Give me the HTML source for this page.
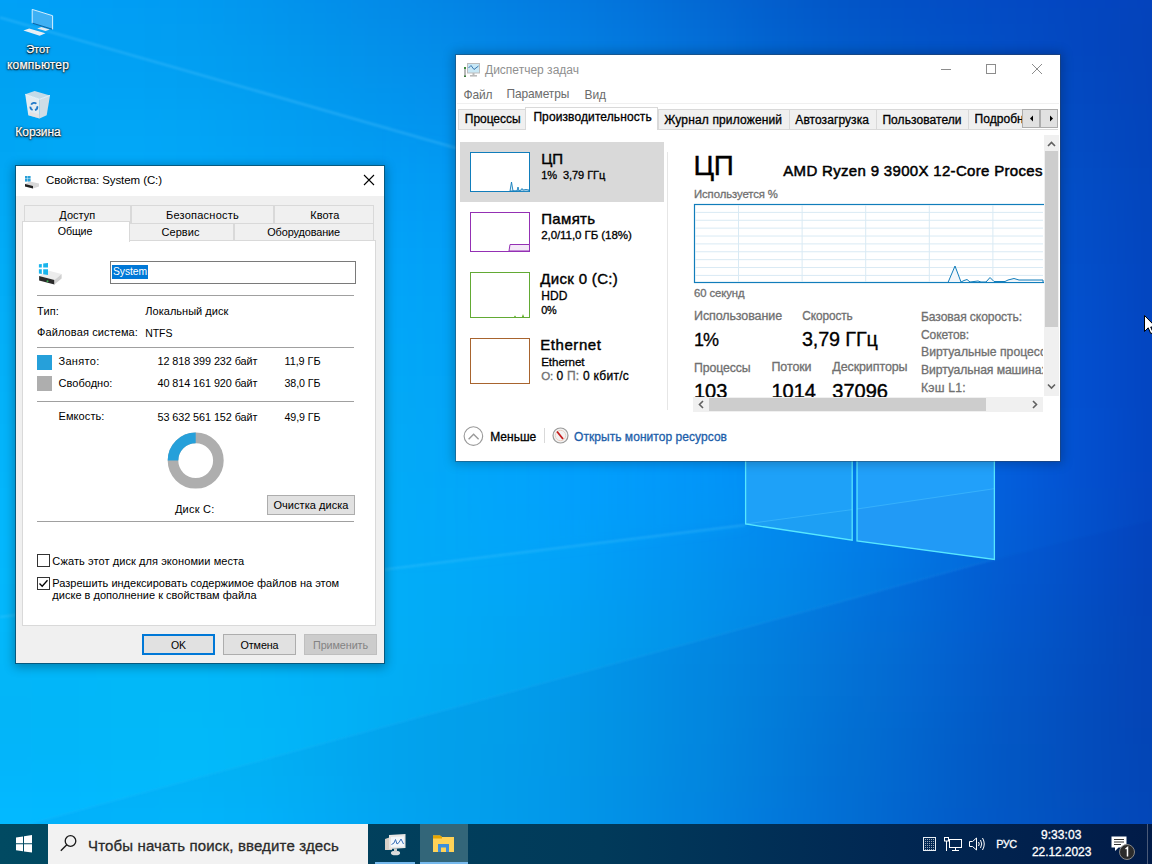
<!DOCTYPE html>
<html><head><meta charset="utf-8"><style>
html,body{margin:0;padding:0;width:1152px;height:864px;overflow:hidden;background:#0290e0}
body{position:relative;font-family:"Liberation Sans",sans-serif}
.a{position:absolute}
.t{position:absolute;white-space:pre;line-height:1}
.s{-webkit-text-stroke:0.3px currentColor}
</style></head><body>
<div id="bg" style="position:absolute;left:0;top:0;width:1152px;height:864px;overflow:hidden"><div style="position:absolute;left:-64px;top:-64px;width:1300px;height:1000px;filter:blur(8px)"><div style="position:absolute;left:0;top:0px;width:1300px;height:72px;background:linear-gradient(to right,#00a1f7 64px,#009ff6 128px,#009df4 192px,#019bf1 256px,#0296ee 320px,#0290eb 384px,#038be8 448px,#0385e5 512px,#037fe2 576px,#0379df 640px,#0371da 704px,#0368d3 768px,#035fcd 832px,#0257c8 896px,#0251c6 960px,#034dc5 1024px,#0349c3 1088px,#0345c0 1152px,#0443bc 1216px)"></div><div style="position:absolute;left:0;top:72px;width:1300px;height:16px;background:linear-gradient(to right,#00a1f5 64px,#00a0f5 128px,#019ef4 192px,#019cf1 256px,#0297ee 320px,#0292eb 384px,#038ce8 448px,#0387e6 512px,#0381e3 576px,#037be0 640px,#0373db 704px,#036ad4 768px,#0260ce 832px,#0258c9 896px,#0252c7 960px,#024ec5 1024px,#034ac3 1088px,#0346bf 1152px,#0443bb 1216px)"></div><div style="position:absolute;left:0;top:88px;width:1300px;height:16px;background:linear-gradient(to right,#00a1f4 64px,#00a0f4 128px,#019ff3 192px,#029df1 256px,#0298ee 320px,#0293eb 384px,#038ee9 448px,#0389e7 512px,#0383e4 576px,#037de1 640px,#0375dc 704px,#036cd6 768px,#0262cf 832px,#025aca 896px,#0254c7 960px,#024fc6 1024px,#034bc3 1088px,#0346bf 1152px,#0443ba 1216px)"></div><div style="position:absolute;left:0;top:104px;width:1300px;height:16px;background:linear-gradient(to right,#00a1f3 64px,#00a1f4 128px,#01a0f3 192px,#029ef1 256px,#029aef 320px,#0295ec 384px,#0390ea 448px,#038be8 512px,#0385e6 576px,#037fe2 640px,#0377dd 704px,#036ed7 768px,#0264d0 832px,#025ccb 896px,#0256c8 960px,#0251c7 1024px,#034cc4 1088px,#0346bf 1152px,#0443ba 1216px)"></div><div style="position:absolute;left:0;top:120px;width:1300px;height:16px;background:linear-gradient(to right,#00a2f3 64px,#00a2f4 128px,#01a1f4 192px,#029ff2 256px,#029bef 320px,#0296ed 384px,#0391eb 448px,#038de9 512px,#0387e7 576px,#0381e4 640px,#0379df 704px,#0370d8 768px,#0266d2 832px,#025ecd 896px,#0257ca 960px,#0252c8 1024px,#034dc4 1088px,#0347bf 1152px,#0443ba 1216px)"></div><div style="position:absolute;left:0;top:136px;width:1300px;height:16px;background:linear-gradient(to right,#00a2f2 64px,#00a3f4 128px,#01a2f4 192px,#02a0f2 256px,#029cf0 320px,#0298ee 384px,#0393ec 448px,#038feb 512px,#0389e8 576px,#0383e5 640px,#037ce1 704px,#0372da 768px,#0268d3 832px,#0260ce 896px,#0259cb 960px,#0253c9 1024px,#024ec5 1088px,#0348c0 1152px,#0443ba 1216px)"></div><div style="position:absolute;left:0;top:152px;width:1300px;height:16px;background:linear-gradient(to right,#00a3f2 64px,#00a4f4 128px,#01a3f5 192px,#02a1f3 256px,#029ef1 320px,#0299ef 384px,#0295ee 448px,#0390ec 512px,#038bea 576px,#0385e7 640px,#037ee2 704px,#0274dc 768px,#026ad5 832px,#0262d0 896px,#025bcc 960px,#0255ca 1024px,#024fc6 1088px,#0348c0 1152px,#0443ba 1216px)"></div><div style="position:absolute;left:0;top:168px;width:1300px;height:16px;background:linear-gradient(to right,#00a4f3 64px,#01a5f5 128px,#01a5f5 192px,#02a3f4 256px,#029ff2 320px,#029bf0 384px,#0296ef 448px,#0392ed 512px,#038deb 576px,#0387e8 640px,#0380e4 704px,#0276de 768px,#026cd7 832px,#0263d2 896px,#025cce 960px,#0256cb 1024px,#0250c7 1088px,#0349c1 1152px,#0344ba 1216px)"></div><div style="position:absolute;left:0;top:184px;width:1300px;height:16px;background:linear-gradient(to right,#00a5f3 64px,#01a6f5 128px,#02a6f6 192px,#02a4f5 256px,#02a0f3 320px,#029cf1 384px,#0298f0 448px,#0294ef 512px,#038fed 576px,#0389ea 640px,#0382e6 704px,#0278e0 768px,#026ed9 832px,#0265d4 896px,#025ed0 960px,#0258cd 1024px,#0251c8 1088px,#034ac2 1152px,#0344bb 1216px)"></div><div style="position:absolute;left:0;top:200px;width:1300px;height:16px;background:linear-gradient(to right,#00a5f3 64px,#01a7f6 128px,#02a7f7 192px,#02a5f6 256px,#02a1f4 320px,#029df2 384px,#029af1 448px,#0295f0 512px,#0391ee 576px,#038bec 640px,#0383e8 704px,#027ae2 768px,#0270db 832px,#0267d6 896px,#0260d2 960px,#0259ce 1024px,#0252c9 1088px,#034ac2 1152px,#0344bb 1216px)"></div><div style="position:absolute;left:0;top:216px;width:1300px;height:16px;background:linear-gradient(to right,#01a6f4 64px,#01a8f7 128px,#02a8f8 192px,#02a6f7 256px,#02a3f5 320px,#029ff4 384px,#029bf3 448px,#0297f2 512px,#0292f0 576px,#028ced 640px,#0285e9 704px,#027ce4 768px,#0272dd 832px,#0269d8 896px,#0261d4 960px,#025ad0 1024px,#0252ca 1088px,#034bc3 1152px,#0344bb 1216px)"></div><div style="position:absolute;left:0;top:232px;width:1300px;height:16px;background:linear-gradient(to right,#01a7f4 64px,#02a9f8 128px,#02a9f9 192px,#02a7f8 256px,#02a4f6 320px,#02a0f5 384px,#029df4 448px,#0299f3 512px,#0294f1 576px,#028eef 640px,#0287eb 704px,#027ee6 768px,#0274df 832px,#026bda 896px,#0263d6 960px,#025bd1 1024px,#0253cb 1088px,#034cc4 1152px,#0345bc 1216px)"></div><div style="position:absolute;left:0;top:248px;width:1300px;height:16px;background:linear-gradient(to right,#01a8f5 64px,#02aaf8 128px,#02aafa 192px,#02a8f9 256px,#02a5f7 320px,#02a1f6 384px,#029ef5 448px,#029af4 512px,#0295f2 576px,#028ff0 640px,#0288ed 704px,#027fe8 768px,#0276e2 832px,#026cdc 896px,#0264d8 960px,#025cd3 1024px,#0254cc 1088px,#034cc5 1152px,#0345bd 1216px)"></div><div style="position:absolute;left:0;top:264px;width:1300px;height:16px;background:linear-gradient(to right,#02a9f5 64px,#02abf9 128px,#02abfa 192px,#02a9fa 256px,#02a6f8 320px,#02a3f7 384px,#029ff6 448px,#029bf5 512px,#0297f3 576px,#0291f1 640px,#0289ee 704px,#0281ea 768px,#0277e4 832px,#026edf 896px,#0266da 960px,#025ed5 1024px,#0255ce 1088px,#034dc6 1152px,#0345bd 1216px)"></div><div style="position:absolute;left:0;top:280px;width:1300px;height:16px;background:linear-gradient(to right,#02aaf6 64px,#02acfa 128px,#02acfb 192px,#02aafa 256px,#02a7f9 320px,#02a4f8 384px,#02a1f7 448px,#029df6 512px,#0298f4 576px,#0292f2 640px,#028bf0 704px,#0282ec 768px,#0278e7 832px,#026fe2 896px,#0267dd 960px,#025ed6 1024px,#0256cf 1088px,#034dc7 1152px,#0345bd 1216px)"></div><div style="position:absolute;left:0;top:296px;width:1300px;height:16px;background:linear-gradient(to right,#02abf6 64px,#02adfa 128px,#02adfc 192px,#02abfb 256px,#02a8f9 320px,#02a5f8 384px,#02a2f7 448px,#029ef6 512px,#0299f5 576px,#0293f3 640px,#028bf2 704px,#0283ef 768px,#027aea 832px,#0271e5 896px,#0268df 960px,#025fd8 1024px,#0256d0 1088px,#034dc7 1152px,#0345be 1216px)"></div><div style="position:absolute;left:0;top:312px;width:1300px;height:16px;background:linear-gradient(to right,#02acf7 64px,#02aefb 128px,#02aefd 192px,#02acfc 256px,#02a9fa 320px,#02a6f9 384px,#02a3f8 448px,#029ff7 512px,#029af5 576px,#0294f4 640px,#028cf3 704px,#0284f1 768px,#027bed 832px,#0272e7 896px,#0269e1 960px,#0260da 1024px,#0256d1 1088px,#034dc8 1152px,#0345be 1216px)"></div><div style="position:absolute;left:0;top:328px;width:1300px;height:16px;background:linear-gradient(to right,#02adf7 64px,#02affb 128px,#02affd 192px,#02adfc 256px,#02aafa 320px,#02a7f9 384px,#02a4f8 448px,#02a0f7 512px,#029bf6 576px,#0295f5 640px,#028df5 704px,#0285f3 768px,#027cef 832px,#0273ea 896px,#026ae4 960px,#0261dc 1024px,#0257d3 1088px,#034ec9 1152px,#0345bf 1216px)"></div><div style="position:absolute;left:0;top:344px;width:1300px;height:16px;background:linear-gradient(to right,#02adf7 64px,#02affc 128px,#02b0fe 192px,#02aefd 256px,#02abfa 320px,#02a8f9 384px,#02a5f8 448px,#02a1f7 512px,#029cf6 576px,#0296f6 640px,#028ef6 704px,#0285f5 768px,#027df2 832px,#0274ec 896px,#026be6 960px,#0261de 1024px,#0257d4 1088px,#034eca 1152px,#0345bf 1216px)"></div><div style="position:absolute;left:0;top:360px;width:1300px;height:16px;background:linear-gradient(to right,#03aef8 64px,#02b0fc 128px,#02b1fe 192px,#02affd 256px,#02abfb 320px,#02a9f9 384px,#02a6f8 448px,#02a2f7 512px,#029df6 576px,#0296f7 640px,#028ff8 704px,#0286f7 768px,#027ef3 832px,#0275ee 896px,#026ce8 960px,#0262df 1024px,#0257d5 1088px,#034ecb 1152px,#0345bf 1216px)"></div><div style="position:absolute;left:0;top:376px;width:1300px;height:16px;background:linear-gradient(to right,#03aff8 64px,#02b1fc 128px,#02b1fe 192px,#02affd 256px,#02acfa 320px,#02a9f9 384px,#02a6f8 448px,#02a3f7 512px,#029ef7 576px,#0297f8 640px,#028ff9 704px,#0287f8 768px,#027ff5 832px,#0276f0 896px,#026de9 960px,#0262e1 1024px,#0258d7 1088px,#034ecb 1152px,#0345c0 1216px)"></div><div style="position:absolute;left:0;top:392px;width:1300px;height:16px;background:linear-gradient(to right,#03aff8 64px,#02b1fc 128px,#02b2ff 192px,#02b0fd 256px,#02adfa 320px,#02aaf9 384px,#02a7f8 448px,#02a3f7 512px,#029ef7 576px,#0298f9 640px,#0290fb 704px,#0288f9 768px,#0280f6 832px,#0277f1 896px,#026eea 960px,#0263e2 1024px,#0258d8 1088px,#034ecc 1152px,#0345c0 1216px)"></div><div style="position:absolute;left:0;top:408px;width:1300px;height:16px;background:linear-gradient(to right,#03b0f8 64px,#02b2fd 128px,#02b3ff 192px,#02b1fe 256px,#02adfa 320px,#02aaf8 384px,#02a8f7 448px,#02a4f7 512px,#029ff8 576px,#0299fa 640px,#0291fc 704px,#0289fa 768px,#0281f6 832px,#0278f1 896px,#026feb 960px,#0264e3 1024px,#0358d9 1088px,#034ecd 1152px,#0345c0 1216px)"></div><div style="position:absolute;left:0;top:424px;width:1300px;height:16px;background:linear-gradient(to right,#03b0f8 64px,#02b3fd 128px,#02b4ff 192px,#02b2fe 256px,#02aefa 320px,#02abf8 384px,#02a8f7 448px,#02a4f7 512px,#02a0f8 576px,#0299fb 640px,#0292fc 704px,#028afb 768px,#0282f7 832px,#0279f2 896px,#026fec 960px,#0264e4 1024px,#0359da 1088px,#034ece 1152px,#0345c1 1216px)"></div><div style="position:absolute;left:0;top:440px;width:1300px;height:16px;background:linear-gradient(to right,#03b1f9 64px,#02b3fd 128px,#02b4ff 192px,#02b2fe 256px,#02aef9 320px,#02abf7 384px,#02a9f7 448px,#03a5f7 512px,#02a0f9 576px,#029afc 640px,#0293fd 704px,#028bfb 768px,#0282f7 832px,#027af2 896px,#0270ec 960px,#0265e4 1024px,#0359da 1088px,#034ece 1152px,#0345c1 1216px)"></div><div style="position:absolute;left:0;top:456px;width:1300px;height:16px;background:linear-gradient(to right,#03b2f9 64px,#02b4fe 128px,#02b5ff 192px,#02b3fe 256px,#02aff9 320px,#02acf7 384px,#03a9f6 448px,#03a5f7 512px,#02a1f9 576px,#029bfc 640px,#0293fd 704px,#028bfb 768px,#0283f6 832px,#027bf1 896px,#0271ec 960px,#0265e4 1024px,#0359da 1088px,#034ece 1152px,#0345c1 1216px)"></div><div style="position:absolute;left:0;top:472px;width:1300px;height:16px;background:linear-gradient(to right,#03b2f9 64px,#02b5fe 128px,#02b6ff 192px,#02b4fe 256px,#02aff9 320px,#02acf7 384px,#03a9f6 448px,#03a6f7 512px,#02a1fa 576px,#029bfd 640px,#0294fd 704px,#028cfa 768px,#0284f6 832px,#027bf1 896px,#0271ec 960px,#0266e4 1024px,#035ada 1088px,#034fcf 1152px,#0345c1 1216px)"></div><div style="position:absolute;left:0;top:488px;width:1300px;height:16px;background:linear-gradient(to right,#03b3fa 64px,#02b6fe 128px,#02b7ff 192px,#02b4ff 256px,#02b0f9 320px,#02adf7 384px,#03aaf6 448px,#03a6f8 512px,#02a2fb 576px,#029cfd 640px,#0294fd 704px,#028cfa 768px,#0284f5 832px,#027cf0 896px,#0272eb 960px,#0266e4 1024px,#035ada 1088px,#034fcf 1152px,#0345c1 1216px)"></div><div style="position:absolute;left:0;top:504px;width:1300px;height:16px;background:linear-gradient(to right,#03b4fa 64px,#02b6ff 128px,#02b7ff 192px,#02b5ff 256px,#02b0f9 320px,#02adf7 384px,#03aaf7 448px,#03a7f8 512px,#02a2fb 576px,#029cfd 640px,#0295fc 704px,#028df9 768px,#0285f4 832px,#027cef 896px,#0272ea 960px,#0266e3 1024px,#035ada 1088px,#034fce 1152px,#0345c1 1216px)"></div><div style="position:absolute;left:0;top:520px;width:1300px;height:16px;background:linear-gradient(to right,#03b4fb 64px,#02b7ff 128px,#02b8ff 192px,#02b5ff 256px,#02b1fa 320px,#02adf7 384px,#03aaf7 448px,#03a7f8 512px,#02a3fb 576px,#029dfd 640px,#0295fb 704px,#028df8 768px,#0285f3 832px,#027dee 896px,#0272e9 960px,#0267e3 1024px,#035bd9 1088px,#034fce 1152px,#0345c1 1216px)"></div><div style="position:absolute;left:0;top:536px;width:1300px;height:16px;background:linear-gradient(to right,#03b5fb 64px,#02b8ff 128px,#02b8ff 192px,#02b6ff 256px,#02b1fa 320px,#02aef7 384px,#02abf7 448px,#02a7f9 512px,#02a3fb 576px,#029dfc 640px,#0296fa 704px,#028ef7 768px,#0285f2 832px,#027ded 896px,#0272e8 960px,#0267e2 1024px,#035bd9 1088px,#034fce 1152px,#0445c1 1216px)"></div><div style="position:absolute;left:0;top:552px;width:1300px;height:16px;background:linear-gradient(to right,#03b6fc 64px,#02b8ff 128px,#02b9ff 192px,#02b6ff 256px,#02b2fa 320px,#02aef8 384px,#02abf7 448px,#02a8f9 512px,#02a3fb 576px,#029dfc 640px,#0296f9 704px,#028ef5 768px,#0286f1 832px,#027dec 896px,#0273e7 960px,#0267e0 1024px,#035bd8 1088px,#0350cd 1152px,#0445c0 1216px)"></div><div style="position:absolute;left:0;top:568px;width:1300px;height:16px;background:linear-gradient(to right,#03b6fc 64px,#02b9ff 128px,#02b9ff 192px,#02b7ff 256px,#02b2fb 320px,#02aef8 384px,#02abf8 448px,#02a8f9 512px,#02a3fa 576px,#029dfb 640px,#0296f8 704px,#028ef4 768px,#0286ef 832px,#027dea 896px,#0272e5 960px,#0267df 1024px,#035bd7 1088px,#0350cc 1152px,#0445c0 1216px)"></div><div style="position:absolute;left:0;top:584px;width:1300px;height:16px;background:linear-gradient(to right,#03b7fc 64px,#02b9ff 128px,#02b9ff 192px,#02b7ff 256px,#02b2fb 320px,#02aff9 384px,#02acf8 448px,#02a8f9 512px,#02a4fa 576px,#029ef9 640px,#0296f6 704px,#028ef2 768px,#0286ed 832px,#027de9 896px,#0272e4 960px,#0267de 1024px,#035bd5 1088px,#0350cb 1152px,#0446bf 1216px)"></div><div style="position:absolute;left:0;top:600px;width:1300px;height:16px;background:linear-gradient(to right,#03b7fd 64px,#02b9ff 128px,#02b9ff 192px,#02b7fe 256px,#02b3fb 320px,#02aff9 384px,#02acf8 448px,#02a8f8 512px,#02a4f9 576px,#029ef8 640px,#0296f5 704px,#028ef0 768px,#0286ec 832px,#027de7 896px,#0272e2 960px,#0266dc 1024px,#035bd4 1088px,#0350ca 1152px,#0446be 1216px)"></div><div style="position:absolute;left:0;top:616px;width:1300px;height:16px;background:linear-gradient(to right,#03b7fc 64px,#02b9ff 128px,#02b9ff 192px,#02b7fe 256px,#02b3fb 320px,#02aff9 384px,#02acf8 448px,#02a8f8 512px,#02a4f8 576px,#029ef7 640px,#0296f3 704px,#028eef 768px,#0286ea 832px,#027ce6 896px,#0272e1 960px,#0266db 1024px,#035bd3 1088px,#0350c9 1152px,#0446be 1216px)"></div><div style="position:absolute;left:0;top:632px;width:1300px;height:16px;background:linear-gradient(to right,#03b8fc 64px,#02b9ff 128px,#02b9ff 192px,#02b7fd 256px,#02b3fb 320px,#02b0f9 384px,#02acf7 448px,#02a8f7 512px,#02a4f7 576px,#029ef5 640px,#0296f2 704px,#028eed 768px,#0285e8 832px,#027ce4 896px,#0271df 960px,#0266d9 1024px,#035bd1 1088px,#0350c8 1152px,#0446bd 1216px)"></div><div style="position:absolute;left:0;top:648px;width:1300px;height:16px;background:linear-gradient(to right,#03b7fc 64px,#02b9fe 128px,#02b9fe 192px,#02b7fc 256px,#02b4fa 320px,#02b0f8 384px,#02acf7 448px,#02a8f6 512px,#02a4f6 576px,#029ef4 640px,#0296f0 704px,#028eeb 768px,#0285e7 832px,#027ce2 896px,#0271dd 960px,#0266d7 1024px,#035ad0 1088px,#0350c7 1152px,#0446bc 1216px)"></div><div style="position:absolute;left:0;top:664px;width:1300px;height:16px;background:linear-gradient(to right,#03b7fb 64px,#02b8fd 128px,#02b8fd 192px,#02b7fc 256px,#02b4fa 320px,#02b0f8 384px,#02acf6 448px,#02a8f5 512px,#02a4f4 576px,#029df2 640px,#0296ee 704px,#028dea 768px,#0285e5 832px,#027be1 896px,#0271dc 960px,#0265d6 1024px,#035ace 1088px,#0350c5 1152px,#0446bb 1216px)"></div><div style="position:absolute;left:0;top:680px;width:1300px;height:16px;background:linear-gradient(to right,#03b7fb 64px,#02b8fc 128px,#02b8fc 192px,#02b7fb 256px,#02b4f9 320px,#02b0f8 384px,#02acf6 448px,#02a8f4 512px,#02a3f3 576px,#029df1 640px,#0296ed 704px,#028de8 768px,#0284e4 832px,#027bdf 896px,#0270da 960px,#0265d4 1024px,#035acd 1088px,#0350c4 1152px,#0447bb 1216px)"></div><div style="position:absolute;left:0;top:696px;width:1300px;height:16px;background:linear-gradient(to right,#03b6fa 64px,#02b7fb 128px,#02b7fb 192px,#02b7fa 256px,#02b4f9 320px,#02b0f7 384px,#02acf5 448px,#02a8f4 512px,#02a3f2 576px,#029df0 640px,#0296eb 704px,#028de7 768px,#0284e2 832px,#037ade 896px,#0370d9 960px,#0364d3 1024px,#035acc 1088px,#0350c3 1152px,#0447ba 1216px)"></div><div style="position:absolute;left:0;top:712px;width:1300px;height:16px;background:linear-gradient(to right,#03b6f9 64px,#02b6fa 128px,#02b7fa 192px,#02b7f9 256px,#02b4f8 320px,#02b0f7 384px,#02acf4 448px,#02a8f3 512px,#02a3f1 576px,#029dee 640px,#0295ea 704px,#028de5 768px,#0284e1 832px,#037adc 896px,#036fd7 960px,#0364d1 1024px,#0359ca 1088px,#0350c2 1152px,#0447b9 1216px)"></div><div style="position:absolute;left:0;top:728px;width:1300px;height:16px;background:linear-gradient(to right,#03b5f9 64px,#02b6f9 128px,#02b7f9 192px,#02b7f9 256px,#02b5f8 320px,#02b0f6 384px,#02acf4 448px,#02a7f2 512px,#02a3f0 576px,#029ded 640px,#0295e9 704px,#028ce4 768px,#0283e0 832px,#0379db 896px,#036ed6 960px,#0363d0 1024px,#0359c9 1088px,#034fc1 1152px,#0447b9 1216px)"></div><div style="position:absolute;left:0;top:744px;width:1300px;height:16px;background:linear-gradient(to right,#03b5f8 64px,#02b5f9 128px,#02b7f8 192px,#02b7f8 256px,#02b5f8 320px,#02b0f6 384px,#02acf3 448px,#02a7f1 512px,#02a3ef 576px,#029ded 640px,#0295e8 704px,#028ce4 768px,#0283df 832px,#0379da 896px,#036ed5 960px,#0363cf 1024px,#0359c8 1088px,#034fc1 1152px,#0447b8 1216px)"></div><div style="position:absolute;left:0;top:760px;width:1300px;height:16px;background:linear-gradient(to right,#03b4f8 64px,#02b5f8 128px,#02b7f8 192px,#02b7f8 256px,#02b5f8 320px,#02b1f6 384px,#02abf3 448px,#02a7f1 512px,#02a3ef 576px,#029dec 640px,#0295e8 704px,#028ce3 768px,#0282de 832px,#0278d9 896px,#036dd4 960px,#0263ce 1024px,#0358c7 1088px,#034fc0 1152px,#0447b8 1216px)"></div><div style="position:absolute;left:0;top:776px;width:1300px;height:16px;background:linear-gradient(to right,#03b4f8 64px,#02b5f8 128px,#02b7f8 192px,#02b8f8 256px,#02b5f8 320px,#02b1f6 384px,#02abf3 448px,#02a7f0 512px,#02a3ee 576px,#029deb 640px,#0295e7 704px,#028ce3 768px,#0282de 832px,#0277d9 896px,#026dd3 960px,#0262cd 1024px,#0358c6 1088px,#034fbf 1152px,#0447b7 1216px)"></div><div style="position:absolute;left:0;top:792px;width:1300px;height:16px;background:linear-gradient(to right,#03b4f9 64px,#02b5f9 128px,#02b7f9 192px,#02b8f9 256px,#02b6f8 320px,#02b1f6 384px,#02abf3 448px,#02a7f0 512px,#02a3ee 576px,#029deb 640px,#0295e7 704px,#028ce3 768px,#0281de 832px,#0277d8 896px,#026cd2 960px,#0262cc 1024px,#0358c6 1088px,#034fbf 1152px,#0347b7 1216px)"></div><div style="position:absolute;left:0;top:808px;width:1300px;height:16px;background:linear-gradient(to right,#03b4fa 64px,#02b5f9 128px,#02b7f9 192px,#02b8f9 256px,#02b6f8 320px,#02b1f6 384px,#02abf3 448px,#02a7f0 512px,#02a2ee 576px,#029deb 640px,#0295e7 704px,#028be3 768px,#0281de 832px,#0276d8 896px,#026cd2 960px,#0261cc 1024px,#0258c5 1088px,#034fbf 1152px,#0348b7 1216px)"></div><div style="position:absolute;left:0;top:824px;width:1300px;height:16px;background:linear-gradient(to right,#03b5fb 64px,#02b6fb 128px,#02b8fa 192px,#02b9fa 256px,#02b7f9 320px,#02b1f7 384px,#02abf4 448px,#02a7f1 512px,#02a2ee 576px,#029deb 640px,#0295e7 704px,#028be3 768px,#0281de 832px,#0276d8 896px,#026bd2 960px,#0261cb 1024px,#0258c5 1088px,#034fbf 1152px,#0348b8 1216px)"></div><div style="position:absolute;left:0;top:840px;width:1300px;height:16px;background:linear-gradient(to right,#03b6fd 64px,#02b6fd 128px,#02b8fc 192px,#02b9fc 256px,#02b7fa 320px,#02b2f8 384px,#02abf4 448px,#02a7f1 512px,#02a2ef 576px,#029cec 640px,#0294e8 704px,#028be3 768px,#0280de 832px,#0275d8 896px,#026bd2 960px,#0261cb 1024px,#0258c5 1088px,#034fbf 1152px,#0348b8 1216px)"></div><div style="position:absolute;left:0;top:856px;width:1300px;height:16px;background:linear-gradient(to right,#03b7ff 64px,#02b7ff 128px,#02b9fe 192px,#02bafd 256px,#02b7fc 320px,#02b2f9 384px,#02acf5 448px,#02a7f2 512px,#02a2ef 576px,#029cec 640px,#0294e8 704px,#028ae4 768px,#0280df 832px,#0275d9 896px,#026ad2 960px,#0261cb 1024px,#0258c5 1088px,#0350bf 1152px,#0349b9 1216px)"></div><div style="position:absolute;left:0;top:872px;width:1300px;height:16px;background:linear-gradient(to right,#03b8ff 64px,#02b8ff 128px,#02baff 192px,#02bbff 256px,#02b8fe 320px,#02b2fb 384px,#02acf7 448px,#02a7f3 512px,#02a2f0 576px,#029ced 640px,#0294e9 704px,#028ae5 768px,#027fe0 832px,#0275d9 896px,#026ad2 960px,#0260cc 1024px,#0258c6 1088px,#0250c0 1152px,#0349ba 1216px)"></div><div style="position:absolute;left:0;top:888px;width:1300px;height:16px;background:linear-gradient(to right,#02b9ff 64px,#02b9ff 128px,#02bbff 192px,#02bbff 256px,#02b9ff 320px,#02b3fc 384px,#02acf8 448px,#02a6f5 512px,#02a2f2 576px,#029cee 640px,#0294ea 704px,#028ae6 768px,#027fe1 832px,#0274da 896px,#026ad3 960px,#0260cd 1024px,#0258c7 1088px,#0250c1 1152px,#034abb 1216px)"></div><div style="position:absolute;left:0;top:904px;width:1300px;height:16px;background:linear-gradient(to right,#02bbff 64px,#02bbff 128px,#02bcff 192px,#02bcff 256px,#02b9ff 320px,#02b3ff 384px,#02acfb 448px,#02a7f7 512px,#02a2f3 576px,#029bf0 640px,#0293ec 704px,#0289e8 768px,#027fe2 832px,#0274dc 896px,#026ad4 960px,#0260ce 1024px,#0258c8 1088px,#0251c3 1152px,#034abc 1216px)"></div><div style="position:absolute;left:0;top:920px;width:1300px;height:2000px;background:linear-gradient(to right,#02bdff 64px,#02bdff 128px,#02bdff 192px,#02bdff 256px,#02baff 320px,#02b4ff 384px,#02acfd 448px,#02a7f9 512px,#02a1f5 576px,#029bf2 640px,#0293ee 704px,#0289e9 768px,#017ee4 832px,#0174dd 896px,#016ad6 960px,#0160cf 1024px,#0258ca 1088px,#0251c4 1152px,#024bbe 1216px)"></div></div></div>
<svg class="a" style="left:0;top:0" width="1152" height="864" viewBox="0 0 1152 864">
<defs><filter id="bl1" x="-5%" y="-50%" width="110%" height="200%"><feGaussianBlur stdDeviation="1.2"/></filter>
<filter id="bl2" x="-5%" y="-50%" width="110%" height="200%"><feGaussianBlur stdDeviation="6"/></filter></defs>
<linearGradient id="wl" x1="380" y1="0" x2="745" y2="0" gradientUnits="userSpaceOnUse"><stop offset="0" stop-color="#00b4ff" stop-opacity="0"/><stop offset="1" stop-color="#00b4ff" stop-opacity="0.22"/></linearGradient>
<polygon points="0,17.5 745.6,230.6 745.6,525 0,617" fill="url(#wl)" filter="url(#bl2)"/>
<line x1="0" y1="17.5" x2="745" y2="230.6" stroke="#5cc8ff" stroke-opacity="0.35" stroke-width="2.2" filter="url(#bl1)"/>
<line x1="0" y1="617" x2="745.6" y2="525" stroke="#5cd0ff" stroke-opacity="0.3" stroke-width="2" filter="url(#bl1)"/>
<polygon points="0,617 745.6,525 852.2,540.2 857,541 994.4,559.4 0,832" fill="#00c0ff" fill-opacity="0.07" filter="url(#bl1)"/>
<polygon points="0,832 994.4,559.4 1152,520 1152,864 0,864" fill="#002080" fill-opacity="0.04" filter="url(#bl1)"/>
<line x1="0" y1="832" x2="994.4" y2="559.4" stroke="#50c8ff" stroke-opacity="0.12" stroke-width="1.5" filter="url(#bl1)"/>
<polygon points="745.6,440 852.2,440 852.2,540.2 745.6,524" fill="#1ea1f8"/>
<polygon points="857,440 994.4,440 994.4,559.4 857,541" fill="#21a0fa"/>
<polygon points="745.6,524 852.2,509.6 852.2,540.2" fill="#1d9ff4" />
<polygon points="857,509 994.4,488.7 994.4,559.4 857,541" fill="#219af6"/>
<line x1="745.6" y1="524" x2="852.2" y2="509.6" stroke="#4cc4ff" stroke-opacity="0.5" stroke-width="1"/>
<line x1="857" y1="509" x2="994.4" y2="488.7" stroke="#4cc4ff" stroke-opacity="0.5" stroke-width="1"/>
<g stroke="#5ef0ff" stroke-width="1.3" stroke-opacity="0.9" fill="none">
<polyline points="745.6,440 745.6,524 852.2,540.2 852.2,440"/>
<polyline points="857,440 857,541 994.4,559.4 994.4,440"/>
</g>
</svg><svg class="a" style="left:18px;top:4px" width="40" height="36" viewBox="18 4 40 36">
<polygon points="32.2,9.4 52.6,15.7 52.6,29.4 32.2,23.2" fill="#3eb0f4"/>
<polyline points="32.2,23.2 32.2,9.4 52.6,15.7" fill="none" stroke="#e6f6ff" stroke-width="0.9"/>
<polyline points="32.6,23.2 52.2,29.2" fill="none" stroke="#0a5a98" stroke-width="0.9"/>
<line x1="52.6" y1="15.7" x2="52.6" y2="29.4" stroke="#d8f0ff" stroke-width="1"/>
<polygon points="23.4,30.5 29.25,28.4 45.5,33.2 39.7,35.7" fill="#e8eef4"/>
<polygon points="37.2,28.6 41.3,27.1 49.7,29.4 45.5,31.1" fill="#e4eaf0"/>
</svg><div class="t" style="left:26.20px;top:44.30px;font-size:11.1px;color:#fff;letter-spacing:-0.090px;text-shadow:0 1px 1px #000,0 0 2px #000,0 1px 3px rgba(0,0,0,.6);-webkit-text-stroke:0.25px #fff;">Этот</div><div class="t" style="left:7.00px;top:58.84px;font-size:12px;color:#fff;letter-spacing:0.167px;text-shadow:0 1px 1px #000,0 0 2px #000,0 1px 3px rgba(0,0,0,.6);-webkit-text-stroke:0.25px #fff;">компьютер</div><svg class="a" style="left:20px;top:86px" width="36" height="36" viewBox="20 86 36 36">
<polygon points="25.2,94.3 34.6,91 50,95.4 39.6,99.3" fill="#c4dbe8"/>
<polygon points="25.2,94.3 39.6,99.3 39.6,118.5 28.3,115.2" fill="#e2ecf2"/>
<polygon points="39.6,99.3 50,95.4 46.7,115.2 39.6,118.5" fill="#cfdde6"/>
<polyline points="25.2,94.3 39.6,99.3 50,95.4" fill="none" stroke="#f4f9fc" stroke-width="0.8"/>
<g fill="none" stroke="#1f78c8" stroke-width="1.8">
<path d="M31.2 104.6 A3.4 3.4 0 0 1 36.4 103.6"/><path d="M37.2 106.2 A3.4 3.4 0 0 1 35 110.2"/><path d="M32.6 110 A3.4 3.4 0 0 1 30.4 106.6"/>
</g>
<path d="M30 112 L39.6 114.5 L39.6 118.5 L28.3 115.2Z" fill="#e8d8d4" fill-opacity="0.5"/>
</svg><div class="t" style="left:15.30px;top:125.84px;font-size:12px;color:#fff;letter-spacing:-0.041px;text-shadow:0 1px 1px #000,0 0 2px #000,0 1px 3px rgba(0,0,0,.6);-webkit-text-stroke:0.25px #fff;">Корзина</div><div class="a" style="left:15px;top:165px;width:368px;height:497px;border:1px solid #065a80;background:#f0f0f0;background-clip:padding-box;box-shadow:0 2px 10px 1px rgba(0,0,0,.3)"></div><div class="a" style="left:16px;top:166px;width:368px;height:30px;background:#fff"></div><svg class="a" style="left:24px;top:175px" width="16" height="14" viewBox="0 0 16 14">
<rect x="1" y="1" width="2.6" height="2.6" fill="#2aa0d8"/><rect x="4" y="1" width="2.6" height="2.6" fill="#2aa0d8"/>
<rect x="1" y="4" width="2.6" height="2.6" fill="#2aa0d8"/><rect x="4" y="4" width="2.6" height="2.6" fill="#2aa0d8"/>
<polygon points="1,9 6,6.5 15,8.5 15,11.5 9,13.5 1,11.5" fill="#d8d8d8"/>
<polygon points="1,9 9,11 9,13.5 1,11.5" fill="#222"/>
</svg><div class="t" style="left:46.00px;top:174.95px;font-size:11.52px;color:#000;letter-spacing:-0.084px;">Свойства: System (C:)</div><svg class="a" style="left:363px;top:174px" width="12" height="12"><path d="M1 1L11 11M11 1L1 11" stroke="#000" stroke-width="1.1"/></svg><div class="a" style="left:24px;top:205px;width:107px;height:18px;box-sizing:border-box;border:1px solid #d9d9d9;border-bottom:none;background:#f0f0f0"></div><div class="a" style="left:131px;top:205px;width:143px;height:18px;box-sizing:border-box;border:1px solid #d9d9d9;border-bottom:none;background:#f0f0f0"></div><div class="a" style="left:274px;top:205px;width:100px;height:18px;box-sizing:border-box;border:1px solid #d9d9d9;border-bottom:none;background:#f0f0f0"></div><div class="t" style="left:59.30px;top:209.89px;font-size:11px;color:#000;letter-spacing:0.031px;">Доступ</div><div class="t" style="left:166.00px;top:209.89px;font-size:11px;color:#000;letter-spacing:0.233px;">Безопасность</div><div class="t" style="left:310.30px;top:209.89px;font-size:11px;color:#000;letter-spacing:-0.009px;">Квота</div><div class="a" style="left:129px;top:223px;width:105px;height:18px;box-sizing:border-box;border:1px solid #d9d9d9;border-bottom:none;background:#f0f0f0"></div><div class="a" style="left:234px;top:223px;width:140px;height:18px;box-sizing:border-box;border:1px solid #d9d9d9;border-bottom:none;background:#f0f0f0"></div><div class="a" style="left:22px;top:240px;width:354px;height:386px;box-sizing:border-box;border:1px solid #d9d9d9;background:#fff"></div><div class="a" style="left:22px;top:221px;width:108px;height:21px;box-sizing:border-box;border:1px solid #d9d9d9;border-bottom:none;background:#fff"></div><div class="t" style="left:57.70px;top:225.66px;font-size:10.68px;color:#000;letter-spacing:-0.105px;">Общие</div><div class="t" style="left:161.50px;top:227.19px;font-size:11px;color:#000;letter-spacing:0.055px;">Сервис</div><div class="t" style="left:267.20px;top:227.28px;font-size:10.89px;color:#000;letter-spacing:-0.093px;">Оборудование</div><svg class="a" style="left:34px;top:256px" width="34" height="34" viewBox="34 256 34 34">
<polygon points="39.1,275.9 48,270.5 61.6,274 54.5,280" fill="#ececec"/>
<polygon points="39.1,275.9 54.5,280 54.5,284.6 39.1,280.5" fill="#2a2a2a"/>
<polygon points="54.5,280 61.6,274 61.6,278.5 54.5,284.6" fill="#d0d0d0"/>
<circle cx="47.5" cy="281.3" r="1" fill="#3cb050"/>
<polygon points="38.9,264.3 41.8,263.9 41.8,267.6 38.9,267.6" fill="#18b4ec"/>
<polygon points="43.2,263.6 48,263 48,267.6 43.2,267.6" fill="#18b4ec"/>
<polygon points="38.9,269.2 41.8,269.2 41.8,274 38.9,273.6" fill="#18b4ec"/>
<polygon points="43.2,269.2 48,269.2 48,275 43.2,274.3" fill="#18b4ec"/>
</svg><div class="a" style="left:110px;top:261px;width:246px;height:23px;box-sizing:border-box;border:1px solid #7a7a7a;background:#fff"></div><div class="a" style="left:112px;top:265px;width:36px;height:14px;background:#0078d7"></div><div class="t" style="left:113.00px;top:267.24px;font-size:10.35px;color:#fff;letter-spacing:-0.086px;">System</div><div class="a" style="left:37px;top:295px;width:317px;height:1px;background:#a0a0a0"></div><div class="a" style="left:37px;top:347px;width:317px;height:1px;background:#a0a0a0"></div><div class="a" style="left:37px;top:401px;width:317px;height:1px;background:#a0a0a0"></div><div class="a" style="left:37px;top:521px;width:317px;height:1px;background:#a0a0a0"></div><div class="t" style="left:37.00px;top:306.49px;font-size:11px;color:#000;letter-spacing:0.152px;">Тип:</div><div class="t" style="left:145.30px;top:306.49px;font-size:11px;color:#000;letter-spacing:0.019px;">Локальный диск</div><div class="t" style="left:37.00px;top:327.19px;font-size:11px;color:#000;letter-spacing:0.113px;">Файловая система:</div><div class="t" style="left:145.30px;top:327.61px;font-size:10.5px;color:#000;letter-spacing:-0.103px;">NTFS</div><div class="a" style="left:37px;top:355px;width:15px;height:15px;background:#26a0da"></div><div class="a" style="left:37px;top:376px;width:15px;height:15px;background:#aeaeae"></div><div class="t" style="left:58.50px;top:355.99px;font-size:11px;color:#000;letter-spacing:0.301px;">Занято:</div><div class="t" style="left:157.50px;top:356.12px;font-size:10.85px;color:#000;letter-spacing:-0.080px;">12 818 399 232 байт</div><div class="t" style="left:284.50px;top:356.06px;font-size:10.91px;color:#000;letter-spacing:-0.078px;">11,9 ГБ</div><div class="t" style="left:58.50px;top:377.69px;font-size:11px;color:#000;letter-spacing:0.038px;">Свободно:</div><div class="t" style="left:157.50px;top:377.82px;font-size:10.85px;color:#000;letter-spacing:-0.080px;">40 814 161 920 байт</div><div class="t" style="left:284.50px;top:377.97px;font-size:10.67px;color:#000;letter-spacing:-0.078px;">38,0 ГБ</div><div class="t" style="left:58.50px;top:411.39px;font-size:11px;color:#000;letter-spacing:0.088px;">Емкость:</div><div class="t" style="left:157.50px;top:411.52px;font-size:10.85px;color:#000;letter-spacing:-0.080px;">53 632 561 152 байт</div><div class="t" style="left:284.50px;top:411.67px;font-size:10.67px;color:#000;letter-spacing:-0.078px;">49,9 ГБ</div><svg class="a" style="left:160px;top:425px" width="72" height="72" viewBox="160 425 72 72">
<circle cx="195.7" cy="460.6" r="22.7" fill="none" stroke="#aeaeae" stroke-width="10.600000000000001"/>
<path d="M 173.0 460.6 A 22.7 22.7 0 0 1 195.7 437.90000000000003" fill="none" stroke="#26a0da" stroke-width="10.600000000000001"/>
</svg><div class="t" style="left:174.95px;top:504.09px;font-size:11px;color:#000;letter-spacing:0.219px;">Диск C:</div><div class="a" style="left:267px;top:495px;width:88px;height:20px;box-sizing:border-box;border:1px solid #adadad;background:#e1e1e1"></div><div class="t" style="left:273.50px;top:499.69px;font-size:11px;color:#000;letter-spacing:0.043px;">Очистка диска</div><div class="a" style="left:37px;top:554px;width:13px;height:13px;box-sizing:border-box;border:1px solid #333;background:#fff"></div><div class="a" style="left:37px;top:577px;width:13px;height:13px;box-sizing:border-box;border:1px solid #333;background:#fff"></div><svg class="a" style="left:37px;top:577px" width="13" height="13"><path d="M2.5 6.5L5.2 9.3L10.5 3.2" fill="none" stroke="#000" stroke-width="1.3"/></svg><div class="t" style="left:52.30px;top:555.69px;font-size:11px;color:#000;letter-spacing:0.079px;">Сжать этот диск для экономии места</div><div class="t" style="left:52.30px;top:577.99px;font-size:11px;color:#000;letter-spacing:0.004px;">Разрешить индексировать содержимое файлов на этом</div><div class="t" style="left:52.30px;top:590.49px;font-size:11px;color:#000;letter-spacing:0.021px;">диске в дополнение к свойствам файла</div><div class="a" style="left:142px;top:634px;width:73px;height:21px;box-sizing:border-box;border:2px solid #0078d7;background:#e1e1e1"></div><div class="t" style="left:171.00px;top:640.09px;font-size:10.53px;color:#000;letter-spacing:-0.114px;">OK</div><div class="a" style="left:223px;top:634px;width:73px;height:21px;box-sizing:border-box;border:1px solid #adadad;background:#e1e1e1"></div><div class="t" style="left:240.50px;top:639.90px;font-size:10.75px;color:#000;letter-spacing:-0.096px;">Отмена</div><div class="a" style="left:304px;top:634px;width:73px;height:21px;box-sizing:border-box;border:1px solid #bfbfbf;background:#cccccc"></div><div class="t" style="left:313.00px;top:639.85px;font-size:10.81px;color:#838383;letter-spacing:-0.093px;">Применить</div><div class="a" style="left:455px;top:54px;width:604px;height:406px;border:1px solid rgba(50,65,80,.42);background:#fff;background-clip:padding-box;box-shadow:0 0 10px 2px rgba(0,0,0,.22)"></div><svg class="a" style="left:463px;top:62px" width="18" height="16" viewBox="0 0 18 16">
<rect x="1" y="5" width="2" height="10" fill="#b8b8b8"/><rect x="1" y="5" width="2" height="2" fill="#3a8a3a"/><rect x="1" y="13.5" width="2" height="1.5" fill="#3a7a3a"/>
<rect x="4.5" y="1.5" width="12" height="9.5" fill="#c8e8f6" stroke="#bdbdbd" stroke-width="1"/>
<polyline points="5.5,6 8,3.5 11,7.5 15.5,4" fill="none" stroke="#2a6aa8" stroke-width="0.9"/>
<rect x="9.5" y="11" width="2" height="2" fill="#bbb"/><rect x="7" y="13" width="7" height="1.6" fill="#bbb"/>
</svg><div class="t" style="left:485.00px;top:63.54px;font-size:12px;color:#8f8f8f;letter-spacing:0.009px;">Диспетчер задач</div><div class="a" style="left:941px;top:69px;width:10px;height:1px;background:#8c8c8c"></div><div class="a" style="left:986px;top:64px;width:10px;height:10px;box-sizing:border-box;border:1px solid #8c8c8c"></div><svg class="a" style="left:1031px;top:63px" width="12" height="12"><path d="M1 1L11 11M11 1L1 11" stroke="#8c8c8c" stroke-width="1"/></svg><div class="t" style="left:463.50px;top:89.06px;font-size:11.98px;color:#6b6b6b;letter-spacing:-0.110px;">Файл</div><div class="t" style="left:506.50px;top:89.09px;font-size:11.94px;color:#6b6b6b;letter-spacing:-0.106px;">Параметры</div><div class="t" style="left:584.50px;top:89.04px;font-size:12px;color:#6b6b6b;letter-spacing:-0.068px;">Вид</div><div class="a" style="left:457px;top:103px;width:602px;height:1px;background:#f0f0f0"></div><div class="a" style="left:458px;top:109px;width:68px;height:21px;box-sizing:border-box;border:1px solid #d9d9d9;border-right:none;background:#f0f0f0"></div><div class="a" style="left:658px;top:109px;width:131px;height:21px;box-sizing:border-box;border:1px solid #d9d9d9;border-right:none;background:#f0f0f0"></div><div class="a" style="left:789px;top:109px;width:87px;height:21px;box-sizing:border-box;border:1px solid #d9d9d9;border-right:none;background:#f0f0f0"></div><div class="a" style="left:876px;top:109px;width:92px;height:21px;box-sizing:border-box;border:1px solid #d9d9d9;border-right:none;background:#f0f0f0"></div><div class="a" style="left:968px;top:109px;width:54px;height:21px;box-sizing:border-box;border:1px solid #d9d9d9;border-right:none;background:#f0f0f0"></div><div class="a" style="left:458px;top:129px;width:600px;height:1px;background:#d9d9d9"></div><div class="a" style="left:525px;top:107px;width:133px;height:23px;box-sizing:border-box;border:1px solid #d9d9d9;border-bottom:none;background:#fff"></div><div class="t" style="left:464.80px;top:113.44px;font-size:12px;color:#000;letter-spacing:-0.037px;-webkit-text-stroke:0.3px currentColor;">Процессы</div><div class="t" style="left:533.40px;top:111.44px;font-size:12px;color:#000;letter-spacing:0.108px;-webkit-text-stroke:0.3px currentColor;">Производительность</div><div class="t" style="left:664.20px;top:113.54px;font-size:12px;color:#000;letter-spacing:0.154px;-webkit-text-stroke:0.3px currentColor;">Журнал приложений</div><div class="t" style="left:795.30px;top:113.54px;font-size:12px;color:#000;letter-spacing:0.078px;-webkit-text-stroke:0.3px currentColor;">Автозагрузка</div><div class="t" style="left:882.40px;top:113.54px;font-size:12px;color:#000;letter-spacing:0.075px;-webkit-text-stroke:0.3px currentColor;">Пользователи</div><div class="a" style="left:974.5px;top:109px;width:47.5px;height:20px;overflow:hidden"><div class="t s" style="left:0;top:4.16px;font-size:12px;letter-spacing:0.05px">Подробности</div></div><div class="a" style="left:1022px;top:109px;width:18px;height:19px;box-sizing:border-box;border:1px solid #adadad;background:#e1e1e1"></div><div class="a" style="left:1040px;top:109px;width:18px;height:19px;box-sizing:border-box;border:1px solid #adadad;background:#e1e1e1"></div><svg class="a" style="left:1022px;top:109px" width="36" height="19"><path d="M11 6.5L8 9.5L11 12.5Z" fill="#000"/><path d="M28 6.5L31 9.5L28 12.5Z" fill="#000"/></svg><div class="a" style="left:460px;top:142px;width:204px;height:60px;background:#d9d9d9"></div><div class="a" style="left:667px;top:152px;width:1px;height:258px;background:#e6e6e6"></div><svg class="a" style="left:469px;top:151px" width="62" height="235" viewBox="469 151 62 235">
<rect x="470.5" y="152.5" width="59" height="39" fill="#fff" stroke="#117dbb" stroke-width="1"/>
<path d="M510 191 L511.5 182 L513 191 L517 191 L518 187 L519 191 L521 190 L522 188.5 L523 190 L526 189.5 L529 190 L529 191.2 Z" fill="#e6f2fa" stroke="#117dbb" stroke-width="0.9"/>
<rect x="470.5" y="212.5" width="59" height="39" fill="#fff" stroke="#9430b4" stroke-width="1"/>
<path d="M509 251 L510 244.5 L529.5 244.5 L529.5 251 Z" fill="#f4e8f8" stroke="#9430b4" stroke-width="1"/>
<rect x="470.5" y="272.5" width="59" height="45" fill="#fff" stroke="#62aa34" stroke-width="1"/>
<path d="M514 317 L515 315.5 L516 317 L522 317 L523 314 L524 317Z" fill="#4da60c"/>
<rect x="470.5" y="338.5" width="59" height="45" fill="#fff" stroke="#a8642e" stroke-width="1"/>
</svg><div class="t" style="left:541.20px;top:151.10px;font-size:15px;color:#000;letter-spacing:0.062px;-webkit-text-stroke:0.4px currentColor;">ЦП</div><div class="t" style="left:541.20px;top:170.35px;font-size:11.05px;color:#000;letter-spacing:-0.081px;-webkit-text-stroke:0.3px currentColor;">1%  3,79 ГГц</div><div class="t" style="left:541.20px;top:211.30px;font-size:15px;color:#000;letter-spacing:0.342px;-webkit-text-stroke:0.4px currentColor;">Память</div><div class="t" style="left:541.20px;top:229.51px;font-size:11.56px;color:#000;letter-spacing:-0.081px;-webkit-text-stroke:0.3px currentColor;">2,0/11,0 ГБ (18%)</div><div class="t" style="left:540.20px;top:270.90px;font-size:15px;color:#000;letter-spacing:0.338px;-webkit-text-stroke:0.4px currentColor;">Диск 0 (C:)</div><div class="t" style="left:541.20px;top:289.64px;font-size:12px;color:#000;letter-spacing:0.128px;-webkit-text-stroke:0.3px currentColor;">HDD</div><div class="t" style="left:541.20px;top:305.38px;font-size:10.89px;color:#000;letter-spacing:-0.118px;-webkit-text-stroke:0.3px currentColor;">0%</div><div class="t" style="left:540.20px;top:336.90px;font-size:15px;color:#000;letter-spacing:0.573px;-webkit-text-stroke:0.4px currentColor;">Ethernet</div><div class="t" style="left:541.20px;top:355.86px;font-size:11.63px;color:#000;letter-spacing:-0.082px;-webkit-text-stroke:0.3px currentColor;">Ethernet</div><div class="t" style="left:541.20px;top:370.72px;font-size:11.55px;color:#707070;letter-spacing:-0.091px;-webkit-text-stroke:0.3px currentColor;">О:</div><div class="t" style="left:556.50px;top:370.34px;font-size:12px;color:#000;-webkit-text-stroke:0.3px currentColor;">0</div><div class="t" style="left:567.00px;top:370.34px;font-size:12px;color:#707070;letter-spacing:0.023px;-webkit-text-stroke:0.3px currentColor;">П:</div><div class="t" style="left:583.00px;top:370.34px;font-size:12px;color:#000;letter-spacing:0.260px;-webkit-text-stroke:0.3px currentColor;">0 кбит/с</div><div class="t" style="left:693.50px;top:152.33px;font-size:27.84px;color:#000;letter-spacing:-0.305px;-webkit-text-stroke:0.4px currentColor;">ЦП</div><div class="t" style="left:783.30px;top:163.10px;font-size:15px;color:#000;letter-spacing:0.318px;-webkit-text-stroke:0.5px currentColor;">AMD Ryzen 9 3900X 12-Core Proces</div><div class="t" style="left:694.00px;top:188.91px;font-size:11.33px;color:#707070;letter-spacing:-0.091px;-webkit-text-stroke:0.3px currentColor;">Используется %</div><svg class="a" style="left:693px;top:203px" width="351" height="82" viewBox="693 203 351 82">
<rect x="694.5" y="204.5" width="360" height="78" fill="#fff" stroke="#117dbb" stroke-width="1.2"/>
<g stroke="#d9eaf4" stroke-width="1"><line x1="695" y1="212.38" x2="1043" y2="212.38"/><line x1="695" y1="220.26" x2="1043" y2="220.26"/><line x1="695" y1="228.14" x2="1043" y2="228.14"/><line x1="695" y1="236.02" x2="1043" y2="236.02"/><line x1="695" y1="243.90" x2="1043" y2="243.90"/><line x1="695" y1="251.78" x2="1043" y2="251.78"/><line x1="695" y1="259.66" x2="1043" y2="259.66"/><line x1="695" y1="267.54" x2="1043" y2="267.54"/><line x1="695" y1="275.42" x2="1043" y2="275.42"/><line x1="738.50" y1="205" x2="738.50" y2="283"/><line x1="802.10" y1="205" x2="802.10" y2="283"/><line x1="865.70" y1="205" x2="865.70" y2="283"/><line x1="929.30" y1="205" x2="929.30" y2="283"/><line x1="992.90" y1="205" x2="992.90" y2="283"/></g>
<path d="M694.5 282.5 L948 282.5 L955 266 L961 282 L964 280.5 L967 279.5 L970 282 L974 281.5 L978 281 L981 282 L986 282 L990 277.5 L994 281.5 L1005 281.5 L1008 280 L1014 278.5 L1019 280 L1043 280 L1043 282.5 Z" fill="#f1f6fa" stroke="#117dbb" stroke-width="1"/>
<line x1="694.5" y1="204.5" x2="1043" y2="204.5" stroke="#117dbb" stroke-width="1.2"/>
<line x1="694.5" y1="282.5" x2="1043" y2="282.5" stroke="#117dbb" stroke-width="1.2"/>
</svg><div class="t" style="left:694.00px;top:288.12px;font-size:11.32px;color:#707070;letter-spacing:-0.085px;-webkit-text-stroke:0.3px currentColor;">60 секунд</div><div class="t" style="left:694.00px;top:310.42px;font-size:12.5px;color:#707070;letter-spacing:-0.103px;-webkit-text-stroke:0.3px currentColor;">Использование</div><div class="t" style="left:802.30px;top:310.97px;font-size:11.85px;color:#707070;letter-spacing:-0.096px;-webkit-text-stroke:0.3px currentColor;">Скорость</div><div class="t" style="left:694.00px;top:331.46px;font-size:18.0px;color:#000;letter-spacing:-1.000px;-webkit-text-stroke:0.3px currentColor;">1%</div><div class="t" style="left:802.00px;top:329.93px;font-size:19.81px;color:#000;letter-spacing:-0.144px;-webkit-text-stroke:0.3px currentColor;">3,79 ГГц</div><div class="t" style="left:694.00px;top:361.58px;font-size:12.31px;color:#707070;letter-spacing:-0.108px;-webkit-text-stroke:0.3px currentColor;">Процессы</div><div class="t" style="left:771.50px;top:361.44px;font-size:12.48px;color:#707070;letter-spacing:-0.102px;-webkit-text-stroke:0.3px currentColor;">Потоки</div><div class="t" style="left:832.30px;top:361.42px;font-size:12.5px;color:#707070;letter-spacing:-0.104px;-webkit-text-stroke:0.3px currentColor;">Дескрипторы</div><div class="a" style="left:690px;top:380px;width:240px;height:17px;overflow:hidden"><div class="t s" style="left:4px;top:1.07px;font-size:20px;-webkit-text-stroke:0.4px #000">103</div><div class="t s" style="left:81.5px;top:1.07px;font-size:20px;-webkit-text-stroke:0.4px #000">1014</div><div class="t s" style="left:142.3px;top:1.07px;font-size:20px;-webkit-text-stroke:0.4px #000">37096</div></div><div class="t" style="left:921.00px;top:311.26px;font-size:12.1px;color:#707070;letter-spacing:-0.090px;-webkit-text-stroke:0.3px currentColor;">Базовая скорость:</div><div class="t" style="left:921.00px;top:328.94px;font-size:12.0px;color:#707070;letter-spacing:-0.091px;-webkit-text-stroke:0.3px currentColor;">Сокетов:</div><div class="a" style="left:921px;top:340px;width:122px;height:60px;overflow:hidden"><div class="t s" style="left:0;top:6.4px;font-size:12.2px;color:#707070">Виртуальные процессоры:</div><div class="t s" style="left:0;top:24.3px;font-size:12.2px;color:#707070;letter-spacing:-0.1px">Виртуальная машина:</div><div class="t s" style="left:0;top:42.3px;font-size:12.2px;color:#707070;letter-spacing:0.2px">Кэш L1:</div></div><div class="a" style="left:1044px;top:135px;width:15px;height:261px;background:#f0f0f0"></div><div class="a" style="left:1045px;top:151px;width:13px;height:176px;background:#cdcdcd"></div><svg class="a" style="left:1044px;top:135px" width="15" height="261"><path d="M4 11L7.5 7.5L11 11" fill="none" stroke="#606060" stroke-width="1.6"/><path d="M4 249.5L7.5 253L11 249.5" fill="none" stroke="#606060" stroke-width="1.6"/></svg><div class="a" style="left:693px;top:397px;width:350px;height:15px;background:#f0f0f0"></div><div class="a" style="left:709px;top:398px;width:277px;height:13px;background:#cdcdcd"></div><svg class="a" style="left:693px;top:397px" width="350" height="15"><path d="M10 4L6.5 7.5L10 11" fill="none" stroke="#606060" stroke-width="1.6"/><path d="M340 4L343.5 7.5L340 11" fill="none" stroke="#606060" stroke-width="1.6"/></svg><svg class="a" style="left:463px;top:426px" width="22" height="22"><circle cx="10.4" cy="10.1" r="9.3" fill="none" stroke="#9a9a9a" stroke-width="1.1"/><path d="M5.6 13.2L10.6 8.2L15.6 13.2" fill="none" stroke="#9a9a9a" stroke-width="1.4"/></svg><div class="t" style="left:490.20px;top:431.24px;font-size:12px;color:#000;letter-spacing:0.003px;-webkit-text-stroke:0.3px currentColor;">Меньше</div><div class="a" style="left:544px;top:428px;width:1px;height:15px;background:#d9d9d9"></div><svg class="a" style="left:552px;top:427px" width="17" height="17" viewBox="0 0 17 17">
<circle cx="8.5" cy="8.5" r="7.5" fill="#f2f2f2" stroke="#9a9a9a" stroke-width="1.2"/>
<circle cx="8.5" cy="8.5" r="5.2" fill="none" stroke="#e8c8b8" stroke-width="0.8"/>
<path d="M5 4.5L11 12" stroke="#c41a1a" stroke-width="1.8"/>
</svg><div class="t" style="left:574.00px;top:431.24px;font-size:12px;color:#1c5eaa;letter-spacing:0.050px;-webkit-text-stroke:0.3px currentColor;">Открыть монитор ресурсов</div><div class="a" style="left:0px;top:824px;width:1152px;height:40px;background:linear-gradient(to right,#014a62 0px,#013f5c 400px,#013a5a 600px,#012853 880px,#011b48 1152px)"></div><svg class="a" style="left:15px;top:835px" width="18" height="18" viewBox="0 0 18 18">
<polygon points="1,2.4 8,1.4 8,8.2 1,8.2" fill="#fff"/><polygon points="9,1.2 17,0 17,8.2 9,8.2" fill="#fff"/>
<polygon points="1,9.2 8,9.2 8,16.2 1,15.2" fill="#fff"/><polygon points="9,9.2 17,9.2 17,17.6 9,16.4" fill="#fff"/>
</svg><div class="a" style="left:48px;top:824px;width:320px;height:40px;background:#f2f2f2"></div><svg class="a" style="left:59px;top:834px" width="19" height="19"><circle cx="11.5" cy="7" r="5.3" fill="none" stroke="#1a1a1a" stroke-width="1.3"/><path d="M7.8 10.8L1.8 16.8" stroke="#1a1a1a" stroke-width="1.4"/></svg><div class="t" style="left:88.00px;top:837.50px;font-size:15px;color:#2a2a2a;letter-spacing:0.154px;-webkit-text-stroke:0.3px currentColor;">Чтобы начать поиск, введите здесь</div><svg class="a" style="left:383px;top:833px" width="25" height="23" viewBox="0 0 25 23">
<polygon points="2,6 9,3.5 9,17 2,17" fill="#d8d0c8"/>
<polygon points="6,2 22.5,1 22.5,15 6,16" fill="#e8e6e4"/>
<polygon points="8,4 21,3.5 21,13.5 8,14" fill="#f4f8fc"/>
<polyline points="8.5,11.5 11,10 12.5,6.5 14,11 16,9.5 18,6 20.5,11" fill="none" stroke="#3a6fb8" stroke-width="1"/>
<ellipse cx="12.5" cy="20" rx="4.6" ry="2.3" fill="#dcdcdc"/>
<rect x="11" y="15.5" width="3" height="3.5" fill="#cfcfcf"/>
</svg><div class="a" style="left:375px;top:862px;width:40px;height:2px;background:#76b9ed"></div><div class="a" style="left:420px;top:824px;width:48px;height:40px;background:#336679"></div><div class="a" style="left:420px;top:862px;width:48px;height:2px;background:#76b9ed"></div><svg class="a" style="left:432px;top:834px" width="24" height="20" viewBox="0 0 24 20">
<path d="M1 1.5 L8 1.5 L10 3 L22 3 L22 18 L1 18Z" fill="#ffd257"/>
<path d="M1 1.5 L8 1.5 L10 3 L10 4.5 L1 4.5Z" fill="#e6a400"/>
<path d="M6 18 L6 10 L17 10 L17 18 L14 18 L14 13.5 L9 13.5 L9 18Z" fill="#3d8fdc"/>
<rect x="9" y="14" width="5" height="4" fill="#ffd257"/>
</svg><svg class="a" style="left:922px;top:836px" width="16" height="16" viewBox="0 0 16 16">
<rect x="1.5" y="1.5" width="12" height="13" fill="none" stroke="#e8eef4" stroke-width="1"/>
<g fill="#9aa8b8"><rect x="3" y="3" width="1" height="1"/><rect x="3" y="5" width="1" height="1"/><rect x="3" y="7" width="1" height="1"/><rect x="3" y="9" width="1" height="1"/><rect x="3" y="11" width="1" height="1"/><rect x="3" y="13" width="1" height="1"/><rect x="5" y="3" width="1" height="1"/><rect x="5" y="5" width="1" height="1"/><rect x="5" y="7" width="1" height="1"/><rect x="5" y="9" width="1" height="1"/><rect x="5" y="11" width="1" height="1"/><rect x="5" y="13" width="1" height="1"/><rect x="7" y="3" width="1" height="1"/><rect x="7" y="5" width="1" height="1"/><rect x="7" y="7" width="1" height="1"/><rect x="7" y="9" width="1" height="1"/><rect x="7" y="11" width="1" height="1"/><rect x="7" y="13" width="1" height="1"/><rect x="9" y="3" width="1" height="1"/><rect x="9" y="5" width="1" height="1"/><rect x="9" y="7" width="1" height="1"/><rect x="9" y="9" width="1" height="1"/><rect x="9" y="11" width="1" height="1"/><rect x="9" y="13" width="1" height="1"/><rect x="11" y="3" width="1" height="1"/><rect x="11" y="5" width="1" height="1"/><rect x="11" y="7" width="1" height="1"/><rect x="11" y="9" width="1" height="1"/><rect x="11" y="11" width="1" height="1"/><rect x="11" y="13" width="1" height="1"/></g>
</svg><svg class="a" style="left:944px;top:837px" width="19" height="15" viewBox="0 0 19 15">
<rect x="5.5" y="2.5" width="12" height="8" fill="none" stroke="#fff" stroke-width="1"/>
<rect x="0.5" y="0.5" width="4" height="3.5" fill="none" stroke="#fff" stroke-width="1"/>
<path d="M2.5 4V14M8 13.5H15M11.5 10.5V13.5" stroke="#fff" stroke-width="1"/>
</svg><svg class="a" style="left:968px;top:836px" width="18" height="16" viewBox="0 0 18 16">
<path d="M1.5 5.5H4.5L8.5 2V14L4.5 10.5H1.5Z" fill="none" stroke="#fff" stroke-width="1"/>
<path d="M10.5 6Q12 8 10.5 10M12.5 4Q15 8 12.5 12M14.5 2Q18 8 14.5 14" fill="none" stroke="#fff" stroke-width="1"/>
</svg><div class="t" style="left:996.30px;top:838.56px;font-size:10.8px;color:#fff;letter-spacing:-0.409px;-webkit-text-stroke:0.3px currentColor;">РУС</div><div class="t" style="left:1041.00px;top:828.74px;font-size:12px;color:#fff;letter-spacing:0.055px;-webkit-text-stroke:0.3px currentColor;">9:33:03</div><div class="t" style="left:1032.00px;top:846.34px;font-size:12px;color:#fff;letter-spacing:-0.083px;-webkit-text-stroke:0.3px currentColor;">22.12.2023</div><svg class="a" style="left:1110px;top:835px" width="26" height="26" viewBox="0 0 26 26">
<path d="M1.5 1.5H16.5V12.5H8.5L5 16V12.5H1.5Z" fill="#fff"/>
<path d="M4 4.5H14M4 7H14M4 9.5H11" stroke="#333" stroke-width="1"/>
<circle cx="17" cy="17" r="7.5" fill="#2b2b2b" stroke="#888" stroke-width="1"/>
<path d="M15.5 14L17.5 12.5V21.5" fill="none" stroke="#fff" stroke-width="1.5"/>
</svg><div class="a" style="left:1147px;top:824px;width:1px;height:40px;background:#4a5a78"></div><svg class="a" style="left:1144px;top:315px" width="12" height="20" viewBox="0 0 12 20"><path d="M0.5 0.5 L0.5 16.5 L4.2 12.8 L6.8 18.6 L9.2 17.6 L6.7 12 L11.8 12 Z" fill="#fff" stroke="#000" stroke-width="1"/></svg>
</body></html>
